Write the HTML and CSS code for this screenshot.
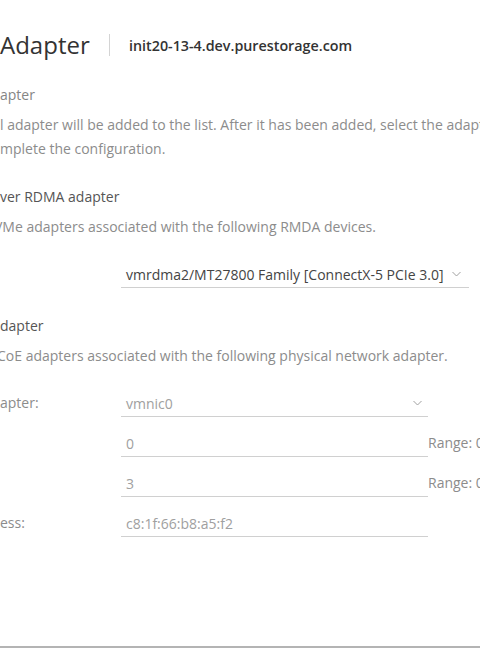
FILE: index.html
```html
<!DOCTYPE html>
<html lang="en">
<head>
<meta charset="utf-8">
<title>Add Software Adapter</title>
<link rel="stylesheet" href="styles.css">
</head>
<body>
<div class="dialog">
  <header class="title-row">
    <h1 class="title">Adapter</h1>
    <span class="divider"></span>
    <span class="host">init20-13-4.dev.purestorage.com</span>
  </header>

  <section class="section first">
    <h2 class="sec-title">apter</h2>
    <p class="desc lead">l adapter will be added to the list. After it has been added, select the adapter and</p>
    <p class="desc">mplete the configuration.</p>
  </section>

  <section class="section">
    <h2 class="sec-title dark">ver RDMA adapter</h2>
    <p class="desc lead shift-v">VMe adapters associated with the following RMDA devices.</p>
    <div class="form-row wide">
      <span class="label"></span>
      <div class="field select strong">
        <span class="value">vmrdma2/MT27800 Family [ConnectX-5 PCIe 3.0]</span>
        <svg class="chev" width="9" height="6" viewBox="0 0 9 6"><path d="M0.5 1l4 4 4-4" fill="none" stroke="#a0a0a0" stroke-width="1"/></svg>
      </div>
    </div>
  </section>

  <section class="section third">
    <h2 class="sec-title dark">dapter</h2>
    <p class="desc lead shift-c">CoE adapters associated with the following physical network adapter.</p>
    <div class="form">
      <div class="form-row">
        <span class="label">apter:</span>
        <div class="field select">
          <span class="value">vmnic0</span>
          <svg class="chev" width="9" height="6" viewBox="0 0 9 6"><path d="M0.5 1l4 4 4-4" fill="none" stroke="#a0a0a0" stroke-width="1"/></svg>
        </div>
      </div>
      <div class="form-row">
        <span class="label"></span>
        <div class="field"><span class="value">0</span></div>
        <span class="hint">Range: 0 - 4094</span>
      </div>
      <div class="form-row">
        <span class="label"></span>
        <div class="field"><span class="value">3</span></div>
        <span class="hint">Range: 0 - 7</span>
      </div>
      <div class="form-row">
        <span class="label">ess:</span>
        <div class="field"><span class="value">c8:1f:66:b8:a5:f2</span></div>
      </div>
    </div>
  </section>

  <footer class="footer"></footer>
</div>
</body>
</html>
```
FILE: styles.css
```css
html, body {
  margin: 0;
  padding: 0;
  background: #ffffff;
}
body {
  width: 480px;
  height: 650px;
  overflow: hidden;
  font-family: "Open Sans", "Liberation Sans", sans-serif;
  color: #565656;
}
.dialog {
  width: 480px;
  height: 650px;
  display: flex;
  flex-direction: column;
  white-space: nowrap;
}
.title-row {
  display: flex;
  align-items: center;
  padding-top: 32px;
  height: 26px;
}
.title {
  margin: 0;
  font-size: 24px;
  font-weight: 400;
  color: #333333;
  line-height: 26px;
  width: 89px;
}
.divider {
  width: 1px;
  height: 22px;
  background: #d4d4d4;
  margin: 0 19px 0 20px;
}
.host {
  font-size: 14.3px;
  font-weight: 600;
  color: #333333;
}
.section {
  display: flex;
  flex-direction: column;
}
.section.first { margin-top: 25px; }
.section + .section { margin-top: 24px; }
.section.third { margin-top: 26px; }
.sec-title {
  margin: 0;
  font-size: 14px;
  font-weight: 400;
  color: #858585;
  line-height: 24px;
}
.sec-title.dark { color: #555555; }
.desc {
  margin: 0;
  font-size: 14px;
  color: #8c8c8c;
  line-height: 24px;
}
.desc.lead { margin-top: 6px; }
.shift-v { text-indent: -6px; }
.shift-c { text-indent: -3px; }
.form { display: flex; flex-direction: column; margin-top: 9px; }
.form-row {
  display: grid;
  grid-template-columns: 121px 307px auto;
  align-items: end;
  height: 40px;
}
.form-row.wide {
  grid-template-columns: 121px 348px;
  margin-top: 9px;
}
.label {
  font-size: 14px;
  color: #8c8c8c;
  line-height: 26px;
  padding-bottom: 1px;
}
.field {
  display: flex;
  align-items: center;
  justify-content: space-between;
  border-bottom: 1px solid #d0d0d0;
  padding: 0 6px 0 5px;
  height: 26px;
  font-size: 14px;
  color: #a0a0a0;
}
.field.strong { color: #444444; padding-right: 8px; }
.hint {
  font-size: 14px;
  color: #8c8c8c;
  line-height: 26px;
  padding-bottom: 1px;
}
.footer {
  margin-top: auto;
  height: 2px;
  border-top: 2px solid #b4b4b4;
}
```
